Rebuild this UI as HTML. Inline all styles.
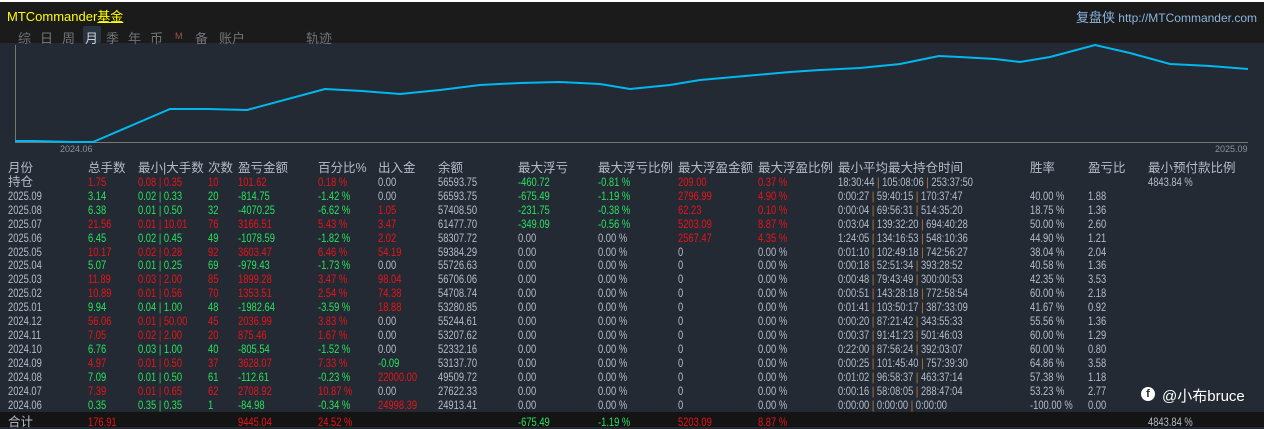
<!DOCTYPE html><html><head><meta charset="utf-8"><style>
body{margin:0;width:1264px;height:427px;overflow:hidden;background:#232a33;font-family:"Liberation Sans","Noto Sans CJK SC",sans-serif;position:relative}
#top{position:absolute;left:0;top:0;width:1264px;height:43px;background:#1b1b1b;border-top:2px solid #fff;box-sizing:border-box}
.t{position:absolute;white-space:nowrap}
.tab{position:absolute;top:26px;font-size:13px;color:#6f747a}
#rows{position:absolute;left:0;top:161px;width:1264px}
.r{position:relative;height:13.93px;font-size:12px;line-height:14px;color:#b4bccb}
.r span{position:absolute;top:0;transform:scaleX(.78);transform-origin:left;white-space:nowrap}
.h{font-size:12.5px}.h span{transform:none}
.a{left:8px}.b{left:88px}.c{left:138px}.d{left:208px}.e{left:238px}.f{left:318px}.g{left:378px}.i{left:438px}.j{left:518px}.k{left:598px}.l{left:678px}.m{left:758px}.n{left:838px}.o{left:1030px}.p{left:1088px}.q{left:1148px}
.R{color:#e8141a}.G{color:#2be060}
.s{color:#c08040;font-style:normal}
#tot{position:absolute;left:0;top:412px;width:1264px;height:15px;background:#141414}
</style></head><body>
<div id="top">
<div class="t" style="left:7px;top:4px;font-size:13px;color:#ffff00">MTCommander<u>基金</u></div>
<div class="t" style="right:7px;top:5px;font-size:12px;color:#8ab4e0"><span style="font-size:13px">复盘侠</span> http://MTCommander.com</div>
<div style="position:absolute;left:83px;top:24px;width:18px;height:17px;background:#2a3340;border-radius:2px"></div>
<span class="tab" style="left:18px">综</span><span class="tab" style="left:40px">日</span><span class="tab" style="left:62px">周</span><span class="tab" style="left:85px;color:#c8d0dc">月</span><span class="tab" style="left:106px">季</span><span class="tab" style="left:128px">年</span><span class="tab" style="left:150px">币</span><span class="tab" style="left:175px;font-size:9px;top:29px;color:#a05050">M</span><span class="tab" style="left:195px">备</span><span class="tab" style="left:219px">账户</span><span class="tab" style="left:306px">轨迹</span>
</div>
<svg style="position:absolute;left:0;top:43px" width="1264" height="115">
<line x1="15.5" y1="2" x2="15.5" y2="99" stroke="#777" stroke-width="1"/>
<line x1="15" y1="99.5" x2="1248" y2="99.5" stroke="#777" stroke-width="1"/>
<polyline fill="none" stroke="#00b8f0" stroke-width="2" points="15,98 35,98 73,99 93,99 170,66 208,66 247,67 325,46 362,48 400,51 440,47 480,42 520,40 560,39 600,41 630,46 670,42 700,37 745,33 790,29 820,27 860,25 900,21 939,13 960,14 995,16 1020,19 1050,14 1095,2 1130,10 1170,21 1210,23 1248,26"/>
<text x="60" y="109" font-size="9" fill="#8a929c" font-family="Liberation Sans">2024.06</text>
<text x="1215" y="109" font-size="9" fill="#8a929c" font-family="Liberation Sans">2025.09</text>
</svg>
<div id="tot"></div>
<div id="rows">
<div class="r h"><span class="a">月份</span><span class="b">总手数</span><span class="c">最小|大手数</span><span class="d">次数</span><span class="e">盈亏金额</span><span class="f">百分比%</span><span class="g">出入金</span><span class="i">余额</span><span class="j">最大浮亏</span><span class="k">最大浮亏比例</span><span class="l">最大浮盈金额</span><span class="m">最大浮盈比例</span><span class="n">最小平均最大持仓时间</span><span class="o">胜率</span><span class="p">盈亏比</span><span class="q">最小预付款比例</span></div>
<div class="r"><span class="a h" style="font-size:12.5px;transform:none">持仓</span><span class="b R">1.75</span><span class="c R">0.08 | 0.35</span><span class="d R">10</span><span class="e R">101.62</span><span class="f R">0.18 %</span><span class="g">0.00</span><span class="i">56593.75</span><span class="j G">-460.72</span><span class="k G">-0.81 %</span><span class="l R">209.00</span><span class="m R">0.37 %</span><span class="n">18:30:44 <i class="s">|</i> 105:08:06 <i class="s">|</i> 253:37:50</span><span class="q">4843.84 %</span></div>
<div class="r"><span class="a">2025.09</span><span class="b G">3.14</span><span class="c G">0.02 | 0.33</span><span class="d G">20</span><span class="e G">-814.75</span><span class="f G">-1.42 %</span><span class="g">0.00</span><span class="i">56593.75</span><span class="j G">-675.49</span><span class="k G">-1.19 %</span><span class="l R">2796.99</span><span class="m R">4.90 %</span><span class="n">0:00:27 <i class="s">|</i> 59:40:15 <i class="s">|</i> 170:37:47</span><span class="o">40.00 %</span><span class="p">1.88</span></div>
<div class="r"><span class="a">2025.08</span><span class="b G">6.38</span><span class="c G">0.01 | 0.50</span><span class="d G">32</span><span class="e G">-4070.25</span><span class="f G">-6.62 %</span><span class="g R">1.05</span><span class="i">57408.50</span><span class="j G">-231.75</span><span class="k G">-0.38 %</span><span class="l R">62.23</span><span class="m R">0.10 %</span><span class="n">0:00:04 <i class="s">|</i> 69:56:31 <i class="s">|</i> 514:35:20</span><span class="o">18.75 %</span><span class="p">1.36</span></div>
<div class="r"><span class="a">2025.07</span><span class="b R">21.56</span><span class="c R">0.01 | 10.01</span><span class="d R">76</span><span class="e R">3166.51</span><span class="f R">5.43 %</span><span class="g R">3.47</span><span class="i">61477.70</span><span class="j G">-349.09</span><span class="k G">-0.56 %</span><span class="l R">5203.09</span><span class="m R">8.87 %</span><span class="n">0:03:04 <i class="s">|</i> 139:32:20 <i class="s">|</i> 694:40:28</span><span class="o">50.00 %</span><span class="p">2.60</span></div>
<div class="r"><span class="a">2025.06</span><span class="b G">6.45</span><span class="c G">0.02 | 0.45</span><span class="d G">49</span><span class="e G">-1078.59</span><span class="f G">-1.82 %</span><span class="g R">2.02</span><span class="i">58307.72</span><span class="j">0.00</span><span class="k">0.00 %</span><span class="l R">2567.47</span><span class="m R">4.35 %</span><span class="n">1:24:05 <i class="s">|</i> 134:16:53 <i class="s">|</i> 548:10:36</span><span class="o">44.90 %</span><span class="p">1.21</span></div>
<div class="r"><span class="a">2025.05</span><span class="b R">10.17</span><span class="c R">0.02 | 0.28</span><span class="d R">92</span><span class="e R">3603.47</span><span class="f R">6.46 %</span><span class="g R">54.19</span><span class="i">59384.29</span><span class="j">0.00</span><span class="k">0.00 %</span><span class="l">0</span><span class="m">0.00 %</span><span class="n">0:01:10 <i class="s">|</i> 102:49:18 <i class="s">|</i> 742:56:27</span><span class="o">38.04 %</span><span class="p">2.04</span></div>
<div class="r"><span class="a">2025.04</span><span class="b G">5.07</span><span class="c G">0.01 | 0.25</span><span class="d G">69</span><span class="e G">-979.43</span><span class="f G">-1.73 %</span><span class="g">0.00</span><span class="i">55726.63</span><span class="j">0.00</span><span class="k">0.00 %</span><span class="l">0</span><span class="m">0.00 %</span><span class="n">0:00:18 <i class="s">|</i> 52:51:34 <i class="s">|</i> 393:28:52</span><span class="o">40.58 %</span><span class="p">1.36</span></div>
<div class="r"><span class="a">2025.03</span><span class="b R">11.89</span><span class="c R">0.03 | 2.00</span><span class="d R">85</span><span class="e R">1899.28</span><span class="f R">3.47 %</span><span class="g R">98.04</span><span class="i">56706.06</span><span class="j">0.00</span><span class="k">0.00 %</span><span class="l">0</span><span class="m">0.00 %</span><span class="n">0:00:48 <i class="s">|</i> 79:43:49 <i class="s">|</i> 300:00:53</span><span class="o">42.35 %</span><span class="p">3.53</span></div>
<div class="r"><span class="a">2025.02</span><span class="b R">10.89</span><span class="c R">0.01 | 0.56</span><span class="d R">70</span><span class="e R">1353.51</span><span class="f R">2.54 %</span><span class="g R">74.38</span><span class="i">54708.74</span><span class="j">0.00</span><span class="k">0.00 %</span><span class="l">0</span><span class="m">0.00 %</span><span class="n">0:00:51 <i class="s">|</i> 143:28:18 <i class="s">|</i> 772:58:54</span><span class="o">60.00 %</span><span class="p">2.18</span></div>
<div class="r"><span class="a">2025.01</span><span class="b G">9.94</span><span class="c G">0.04 | 1.00</span><span class="d G">48</span><span class="e G">-1982.64</span><span class="f G">-3.59 %</span><span class="g R">18.88</span><span class="i">53280.85</span><span class="j">0.00</span><span class="k">0.00 %</span><span class="l">0</span><span class="m">0.00 %</span><span class="n">0:01:41 <i class="s">|</i> 103:50:17 <i class="s">|</i> 387:33:09</span><span class="o">41.67 %</span><span class="p">0.92</span></div>
<div class="r"><span class="a">2024.12</span><span class="b R">56.06</span><span class="c R">0.01 | 50.00</span><span class="d R">45</span><span class="e R">2036.99</span><span class="f R">3.83 %</span><span class="g">0.00</span><span class="i">55244.61</span><span class="j">0.00</span><span class="k">0.00 %</span><span class="l">0</span><span class="m">0.00 %</span><span class="n">0:00:20 <i class="s">|</i> 87:21:42 <i class="s">|</i> 343:55:33</span><span class="o">55.56 %</span><span class="p">1.36</span></div>
<div class="r"><span class="a">2024.11</span><span class="b R">7.05</span><span class="c R">0.02 | 2.00</span><span class="d R">20</span><span class="e R">875.46</span><span class="f R">1.67 %</span><span class="g">0.00</span><span class="i">53207.62</span><span class="j">0.00</span><span class="k">0.00 %</span><span class="l">0</span><span class="m">0.00 %</span><span class="n">0:00:37 <i class="s">|</i> 91:41:23 <i class="s">|</i> 501:46:03</span><span class="o">60.00 %</span><span class="p">1.29</span></div>
<div class="r"><span class="a">2024.10</span><span class="b G">6.76</span><span class="c G">0.03 | 1.00</span><span class="d G">40</span><span class="e G">-805.54</span><span class="f G">-1.52 %</span><span class="g">0.00</span><span class="i">52332.16</span><span class="j">0.00</span><span class="k">0.00 %</span><span class="l">0</span><span class="m">0.00 %</span><span class="n">0:22:00 <i class="s">|</i> 87:56:24 <i class="s">|</i> 392:03:07</span><span class="o">60.00 %</span><span class="p">0.80</span></div>
<div class="r"><span class="a">2024.09</span><span class="b R">4.97</span><span class="c R">0.01 | 0.50</span><span class="d R">37</span><span class="e R">3628.07</span><span class="f R">7.33 %</span><span class="g G">-0.09</span><span class="i">53137.70</span><span class="j">0.00</span><span class="k">0.00 %</span><span class="l">0</span><span class="m">0.00 %</span><span class="n">0:00:25 <i class="s">|</i> 101:45:40 <i class="s">|</i> 757:39:30</span><span class="o">64.86 %</span><span class="p">3.58</span></div>
<div class="r"><span class="a">2024.08</span><span class="b G">7.09</span><span class="c G">0.01 | 0.50</span><span class="d G">61</span><span class="e G">-112.61</span><span class="f G">-0.23 %</span><span class="g R">22000.00</span><span class="i">49509.72</span><span class="j">0.00</span><span class="k">0.00 %</span><span class="l">0</span><span class="m">0.00 %</span><span class="n">0:01:02 <i class="s">|</i> 96:58:37 <i class="s">|</i> 463:37:14</span><span class="o">57.38 %</span><span class="p">1.18</span></div>
<div class="r"><span class="a">2024.07</span><span class="b R">7.39</span><span class="c R">0.01 | 0.65</span><span class="d R">62</span><span class="e R">2708.92</span><span class="f R">10.87 %</span><span class="g">0.00</span><span class="i">27622.33</span><span class="j">0.00</span><span class="k">0.00 %</span><span class="l">0</span><span class="m">0.00 %</span><span class="n">0:00:16 <i class="s">|</i> 58:08:05 <i class="s">|</i> 288:47:04</span><span class="o">53.23 %</span><span class="p">2.77</span></div>
<div class="r"><span class="a">2024.06</span><span class="b G">0.35</span><span class="c G">0.35 | 0.35</span><span class="d G">1</span><span class="e G">-84.98</span><span class="f G">-0.34 %</span><span class="g R">24998.39</span><span class="i">24913.41</span><span class="j">0.00</span><span class="k">0.00 %</span><span class="l">0</span><span class="m">0.00 %</span><span class="n">0:00:00 <i class="s">|</i> 0:00:00 <i class="s">|</i> 0:00:00</span><span class="o">-100.00 %</span><span class="p">0.00</span></div>
<div class="r" style="margin-top:3px"><span class="a" style="font-size:12.5px;transform:none">合计</span><span class="b R">176.91</span><span class="e R">9445.04</span><span class="f R">24.52 %</span><span class="j G">-675.49</span><span class="k G">-1.19 %</span><span class="l R">5203.09</span><span class="m R">8.87 %</span><span class="q">4843.84 %</span></div>
</div>
<div style="position:absolute;left:1141px;top:387px;width:14px;height:14px;border-radius:50%;background:#fff;color:#232a33;font:bold 11px 'Liberation Sans',sans-serif;text-align:center;line-height:15px">f</div>
<div class="t" style="left:1162px;top:385px;font-size:15px;color:#fff">@小布bruce</div>
</body></html>
